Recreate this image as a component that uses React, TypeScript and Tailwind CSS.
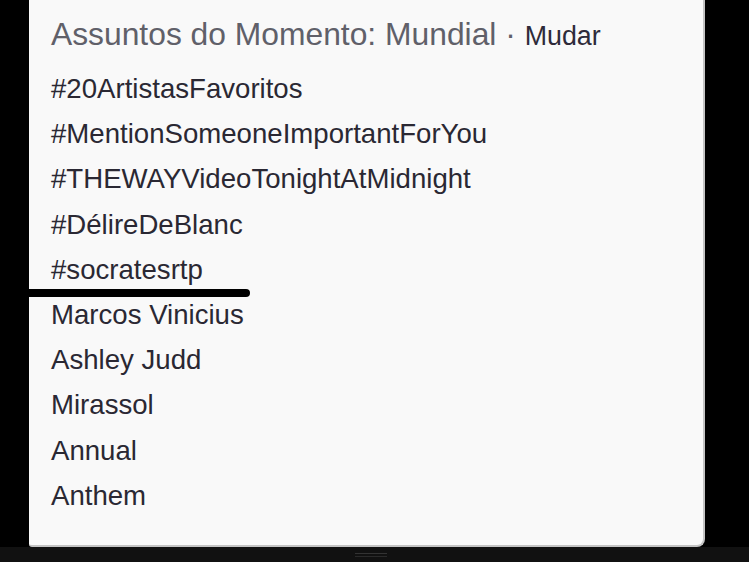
import React from 'react';

const trends = [
  '#20ArtistasFavoritos',
  '#MentionSomeoneImportantForYou',
  '#THEWAYVideoTonightAtMidnight',
  '#DélireDeBlanc',
  '#socratesrtp',
  'Marcos Vinicius',
  'Ashley Judd',
  'Mirassol',
  'Annual',
  'Anthem',
];

export default function App() {
  return (
    <div className="w-[749px] h-[562px] bg-black flex flex-col overflow-hidden font-['Liberation_Sans',Arial,sans-serif]">
      <div className="flex-1 flex">
        <div className="relative ml-[29px] w-[676px] h-full bg-[#f9f9f9] border-r-2 border-b-2 border-[#c4c4c4] rounded-br-[8px] rounded-bl-[3px] pl-[22px] pt-[16px]">
          <h3 className="text-[31.8px] leading-[36px] text-[#606069] whitespace-nowrap">
            Assuntos do Momento: Mundial ·{' '}
            <span className="text-[26.8px] text-[#2e2b3a]">Mudar</span>
          </h3>
          <ul className="mt-[12px]">
            {trends.map((t) => (
              <li key={t} className="text-[27.6px] leading-[45.2px] text-[#2a2833] whitespace-nowrap">
                {t}
              </li>
            ))}
          </ul>
          {/* marker line drawn over the list */}
          <div className="absolute left-[-2px] top-[289px] w-[223px] h-[8px] bg-black rounded-r-full" />
        </div>
      </div>
      <div className="h-[15px] bg-[#111] flex justify-center pt-[6px]">
        <div className="flex flex-col gap-[2px] ml-[2px] mr-[10px]">
          <div className="w-[32px] h-[1px] bg-[#333]" />
          <div className="w-[32px] h-[1px] bg-[#2a2a2a]" />
        </div>
      </div>
    </div>
  );
}
